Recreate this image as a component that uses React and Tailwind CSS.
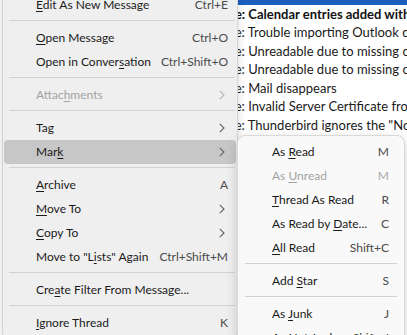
import React from "react";

const FONT = { fontFamily: "Lato, 'Open Sans', sans-serif" };

function Label({ text }) {
  const i = text.indexOf("&");
  if (i < 0) return <span>{text}</span>;
  return (
    <span>
      {text.slice(0, i)}
      <span className="underline underline-offset-[2px] decoration-[1px]">{text[i + 1]}</span>
      {text.slice(i + 2)}
    </span>
  );
}

function Chevron({ disabled }) {
  return (
    <svg width="6" height="10" viewBox="0 0 6 10" className="mr-[2px]">
      <path d="M0.8 0.8 L5 5 L0.8 9.2" fill="none" stroke={disabled ? "#b5b5b5" : "#606060"} strokeWidth="1.1" />
    </svg>
  );
}

const mainItems = [
  { label: "&Edit As New Message", sc: "Ctrl+E" },
  "sep",
  { label: "&Open Message", sc: "Ctrl+O" },
  { label: "Open in Conver&sation", sc: "Ctrl+Shift+O" },
  "sep",
  { label: "Attac&hments", arrow: true, disabled: true },
  "sep",
  { label: "Tag", arrow: true },
  { label: "Mar&k", arrow: true, active: true },
  "sep",
  { label: "&Archive", sc: "A" },
  { label: "&Move To", arrow: true },
  { label: "&Copy To", arrow: true },
  { label: 'Move to "L&ists" Again', sc: "Ctrl+Shift+M" },
  "sep",
  { label: "Cre&ate Filter From Message..." },
  "sep",
  { label: "&Ignore Thread", sc: "K" },
];

const subItems = [
  { label: "As &Read", sc: "M" },
  { label: "As &Unread", sc: "M", disabled: true },
  { label: "&Thread As Read", sc: "R" },
  { label: "As Read by &Date...", sc: "C" },
  { label: "&All Read", sc: "Shift+C" },
  "sep",
  { label: "Add &Star", sc: "S" },
  "sep",
  { label: "As &Junk", sc: "J" },
  { label: "As &Not Junk", sc: "Shift+J" },
];

const rows = [
  { t: "Re: Calendar entries added with", sel: true },
  { t: "Re: Calendar entries added with", bold: true },
  { t: "Re: Trouble importing Outlook data" },
  { t: "Re: Unreadable due to missing charset" },
  { t: "Re: Unreadable due to missing charset" },
  { t: "Re: Mail disappears" },
  { t: "Re: Invalid Server Certificate from" },
  { t: 'Re: Thunderbird ignores the "Not' },
  { t: "Re: Folder pane layout" },
  { t: "Re: Folder pane layout" },
  { t: "Re: Folder pane layout" },
  { t: "Re: Folder pane layout" },
  { t: "Re: Folder pane layout" },
  { t: "Re: Folder pane layout" },
  { t: "Re: Folder pane layout" },
  { t: "Re: Folder pane layout" },
  { t: "Re: Folder pane layout" },
  { t: "Re: Folder pane layout" },
];

function MenuRow({ it, padL, padR }) {
  const color = it.disabled ? "text-[#a3a3a3]" : "text-[#1a1a1a]";
  return (
    <div
      className={`h-[24px] flex items-center justify-between rounded-[4px] ${padL} ${padR} ${
        it.active ? "bg-[#c7c7c7]" : ""
      } ${color}`}
    >
      <Label text={it.label} />
      {it.sc && <span className={it.disabled ? "text-[#a8a8a8]" : "text-[#4a4a4a]"}>{it.sc}</span>}
      {it.arrow && <Chevron disabled={it.disabled} />}
    </div>
  );
}

export default function App() {
  return (
    <div className="relative w-[407px] h-[335px] overflow-hidden bg-white text-[12px]" style={FONT}>
      {/* background window: message list */}
      <div className="flex h-full">
        <div className="w-[2px] bg-[#d8d8d8]" />
        <div className="flex-1 flex flex-col pt-[5px] pl-[222px] -mt-[18.5px] whitespace-nowrap text-[13px]">
          {rows.map((r, i) => (
            <div
              key={i}
              className={`h-[18.5px] shrink-0 flex items-center px-[5px] ${
                r.sel ? "bg-[#1b5fc1] text-white font-bold" : r.bold ? "font-bold text-[#111]" : "text-[#1a1a1a]"
              }`}
            >
              {r.t}
            </div>
          ))}
        </div>
      </div>

      {/* main context menu */}
      <div className="absolute left-[2px] top-[-12px] w-[236px] bg-[#efefef] border border-[#d4d4d4] rounded-[8px] px-[1px] pt-[4px] pb-[4px] shadow-[0_2px_8px_rgba(0,0,0,0.15)]">
        {mainItems.map((it, i) =>
          it === "sep" ? (
            <div key={i} className="pt-[3px] pb-[5px] pl-[5px] pr-[1px]">
              <div className="h-px bg-[#d2d2d2]" />
            </div>
          ) : (
            <MenuRow key={i} it={it} padL="pl-[32px]" padR={it.arrow ? "pr-[9px]" : "pr-[8px]"} />
          )
        )}
      </div>

      {/* Mark submenu */}
      <div className="absolute left-[237px] top-[135px] w-[168px] bg-[#f9f9f9] border border-[#d9d9d9] rounded-[8px] px-[1px] pt-[4px] pb-[4px] shadow-[0_4px_12px_rgba(0,0,0,0.18)]">
        {subItems.map((it, i) =>
          it === "sep" ? (
            <div key={i} className="pt-[3px] pb-[5px] px-[6px]">
              <div className="h-px bg-[#d2d2d2]" />
            </div>
          ) : (
            <MenuRow key={i} it={it} padL="pl-[33px]" padR="pr-[14px]" />
          )
        )}
      </div>
    </div>
  );
}
